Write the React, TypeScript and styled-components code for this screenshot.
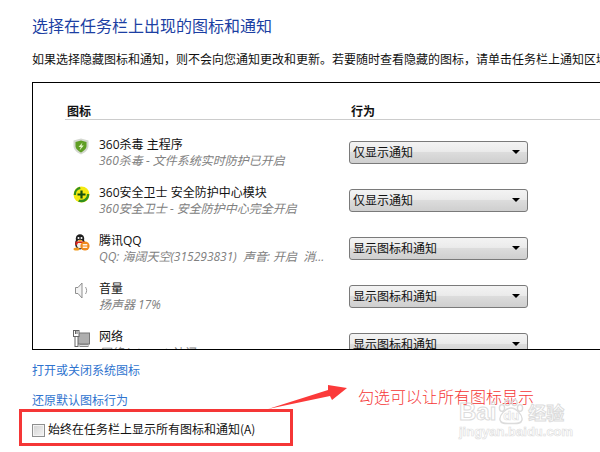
import React from "react";
import styled, { createGlobalStyle } from "styled-components";

const GlobalStyle = createGlobalStyle`
  html, body {
    margin: 0;
    padding: 0;
    background: #fff;
    overflow: hidden;
  }
`;

const FONT = `"Noto Sans CJK SC", "Liberation Sans", sans-serif`;
const LATIN = `"Open Sans", "Noto Sans CJK SC", sans-serif`;

const ShieldIcon = () => (
  <svg width="16" height="17" viewBox="0 0 16 17">
    <path d="M8 0.5 L15.5 2.5 V8 C15.5 12 11.5 15 8 16.5 C4.5 15 0.5 12 0.5 8 V2.5 Z" fill="#d4d8d0" />
    <path d="M8 2.5 L13.5 4 V8 C13.5 11 10.5 13 8 14.5 C5.5 13 2.5 11 2.5 8 V4 Z" fill="#5f9e24" />
    <path d="M9.5 4.5 L5.5 9 H7.8 L6.5 12.5 L10.8 7.5 H8.5 Z" fill="#e4f4c8" />
  </svg>
);

const GuardIcon = () => (
  <svg width="17" height="17" viewBox="0 0 17 17">
    <circle cx="8.5" cy="8.5" r="8" fill="#f5ea10" />
    <path d="M0.8 9 A7.8 7.8 0 0 1 7 0.8 L7.5 3 A5.6 5.6 0 0 0 3 9 Z" fill="#2f8f1e" />
    <path d="M16.2 8 A7.8 7.8 0 0 1 5 15.5 L6.5 13.5 A5.6 5.6 0 0 0 14 8 Z" fill="#2f8f1e" />
    <path d="M7.4 4.5 H9.6 V7.4 H12.5 V9.6 H9.6 V12.5 H7.4 V9.6 H4.5 V7.4 H7.4 Z" fill="#14500f" />
  </svg>
);

const QQIcon = () => (
  <svg width="17" height="17" viewBox="0 0 17 17">
    <ellipse cx="7" cy="9.5" rx="5" ry="6" fill="#2b2b2b" />
    <ellipse cx="7" cy="4.5" rx="4.2" ry="4.2" fill="#1e1e1e" />
    <ellipse cx="7" cy="10" rx="3.2" ry="4.2" fill="#f4f0e8" />
    <circle cx="5.5" cy="4" r="1" fill="#fff" />
    <circle cx="8.5" cy="4" r="1" fill="#fff" />
    <path d="M5 6 H9.5 L8 7.5 H6 Z" fill="#f2a81c" />
    <path d="M2.5 7.5 H11 V9 H5 L4 11 H2.5 Z" fill="#d8241c" />
    <ellipse cx="3.5" cy="15" rx="3" ry="1.6" fill="#f09a1c" />
    <circle cx="12" cy="12" r="4.6" fill="#f08a1c" />
    <path d="M9.7 10.5 H14.3 M9.7 12 H14.3 M9.7 13.5 H14.3" stroke="#fff" strokeWidth="0.9" />
  </svg>
);

const SpeakerIcon = () => (
  <svg width="16" height="17" viewBox="0 0 16 17" fill="none">
    <path d="M2.5 5.5 H5 L9 1 V16 L5 11.5 H2.5 Z" fill="#f4f4f4" stroke="#8f8f8f" />
    <path d="M12.5 5 C14 7.5 14 9.5 12.5 12" stroke="#9a9a9a" />
  </svg>
);

const NetworkIcon = () => (
  <svg width="17" height="17" viewBox="0 0 17 17">
    <rect x="4.5" y="3" width="12" height="11" fill="#aeaeae" stroke="#777" />
    <rect x="2" y="6" width="3" height="10.5" fill="#fff" stroke="#666" />
    <rect x="0.5" y="0.5" width="5.5" height="6" fill="#fff" stroke="#666" />
    <path d="M2.5 1 V4 M4 1 V4" stroke="#666" />
    <rect x="7" y="14.5" width="8" height="2" fill="#ddd" stroke="#888" />
  </svg>
);

const PawIcon = () => (
  <svg width="30" height="26" viewBox="0 0 30 26" fill="none" stroke="#dcdcdc" strokeWidth="1.4">
    <ellipse cx="6" cy="9" rx="2.6" ry="3.4" />
    <ellipse cx="11.5" cy="3.5" rx="2.6" ry="3" />
    <ellipse cx="18.5" cy="3.5" rx="2.6" ry="3" />
    <ellipse cx="24" cy="9" rx="2.6" ry="3.4" />
    <path d="M15 9 C10 9 3 16 4 21 C5 25.5 11 24.5 15 24.5 C19 24.5 25 25.5 26 21 C27 16 20 9 15 9 Z" />
  </svg>
);

const rows = [
  { icon: <ShieldIcon />, name: "360杀毒 主程序", sub: "360杀毒 - 文件系统实时防护已开启", value: "仅显示通知" },
  { icon: <GuardIcon />, name: "360安全卫士 安全防护中心模块", sub: "360安全卫士 - 安全防护中心完全开启", value: "仅显示通知" },
  { icon: <QQIcon />, name: "腾讯QQ", sub: "QQ: 海阔天空(315293831)  声音: 开启  消...", value: "显示图标和通知" },
  { icon: <SpeakerIcon />, name: "音量", sub: "扬声器 17%", value: "显示图标和通知" },
  { icon: <NetworkIcon />, name: "网络", sub: "网络 Internet 访问", value: "显示图标和通知" },
];

export default function App() {
  return (
    <Page>
      <GlobalStyle />
      <Title>选择在任务栏上出现的图标和通知</Title>
      <Description>
        如果选择隐藏图标和通知，则不会向您通知更改和更新。若要随时查看隐藏的图标，请单击任务栏上通知区域的箭头。
      </Description>
      <Panel>
        <HeaderRow>
          <HeaderCell>图标</HeaderCell>
          <HeaderCell>行为</HeaderCell>
        </HeaderRow>
        <RowList>
          {rows.map((r) => (
            <Row key={r.name}>
              <IconText>
                <IconSlot>{r.icon}</IconSlot>
                <div>
                  <Name>{r.name}</Name>
                  <Sub>{r.sub}</Sub>
                </div>
              </IconText>
              <Select>
                {r.value}
                <Caret />
              </Select>
            </Row>
          ))}
        </RowList>
      </Panel>
      <Links>
        <LinkText>打开或关闭系统图标</LinkText>
        <LinkText>还原默认图标行为</LinkText>
      </Links>
      <CheckBox>
        <Check />
        始终在任务栏上显示所有图标和通知(A)
      </CheckBox>

      <Arrow width="90" height="30" viewBox="0 0 90 30">
        <path d="M0 26 L60 7 L60 2 L79 5 L64 17 L62 13 Z" fill="#fb3a3a" />
      </Arrow>
      <Hint>勾选可以让所有图标显示</Hint>
      <Watermark>
        <Logo>
          Bai
          <DuMark>
            <PawIcon />
            <DuText>du</DuText>
          </DuMark>
          <LogoCn>经验</LogoCn>
        </Logo>
        <LogoUrl>jingyan.baidu.com</LogoUrl>
      </Watermark>
    </Page>
  );
}

const Page = styled.div`
  position: relative;
  width: 600px;
  height: 452px;
  overflow: hidden;
  padding: 16px 0 0 32px;
  box-sizing: border-box;
  font-family: ${FONT};
  font-size: 12px;
  color: #000;
  background: #fff;
`;

const Title = styled.h1`
  margin: 0;
  font-size: 16px;
  font-weight: 400;
  line-height: 18px;
  color: #1c3fa3;
  white-space: nowrap;
`;

const Description = styled.p`
  margin: 16px 0 0;
  font-size: 12px;
  line-height: 18px;
  color: #111;
  white-space: nowrap;
`;

const Panel = styled.div`
  box-sizing: border-box;
  width: 600px;
  height: 268px;
  margin-top: 14px;
  padding-left: 32px;
  border: 1px solid #000;
  overflow: hidden;
`;

const HeaderRow = styled.div`
  display: grid;
  grid-template-columns: 284px 1fr;
  height: 36px;
  align-items: end;
  border-bottom: 1px solid #ccc;
`;

const HeaderCell = styled.div`
  padding: 0 0 0 2px;
  font-size: 12px;
  font-weight: 700;
  line-height: 16px;
  color: #111;
`;

const RowList = styled.div`
  display: flex;
  flex-direction: column;
  gap: 18px;
  margin-top: 18px;
`;

const Row = styled.div`
  display: grid;
  grid-template-columns: 284px 179px;
  height: 30px;
`;

const IconText = styled.div`
  display: flex;
  gap: 9px;
  padding-left: 8px;
`;

const IconSlot = styled.div`
  width: 17px;
  height: 17px;
  flex: none;
`;

const Name = styled.div`
  margin: -1px 0 1px;
  font-family: ${LATIN};
  font-size: 12px;
  line-height: 15px;
  color: #111;
  white-space: nowrap;
`;

const Sub = styled.div`
  font-family: ${LATIN};
  font-size: 12px;
  font-style: italic;
  line-height: 15px;
  color: #808080;
  white-space: pre;
`;

const Select = styled.div`
  position: relative;
  box-sizing: border-box;
  height: 23px;
  margin-top: 3px;
  padding-left: 3px;
  border: 1px solid #7a7a7a;
  border-radius: 3px;
  background: linear-gradient(#f3f3f3 0%, #ebebeb 45%, #dcdcdc 50%, #cfcfcf 100%);
  font-size: 12px;
  line-height: 20px;
  color: #111;
`;

const Caret = styled.span`
  position: absolute;
  right: 7px;
  top: 8px;
  border-left: 4px solid transparent;
  border-right: 4px solid transparent;
  border-top: 4px solid #000;
`;

const Links = styled.div`
  display: flex;
  flex-direction: column;
  gap: 12px;
  margin-top: 11px;
`;

const LinkText = styled.div`
  font-size: 12px;
  line-height: 18px;
  color: #2f74cf;
`;

const CheckBox = styled.div`
  box-sizing: border-box;
  display: flex;
  align-items: center;
  gap: 3px;
  width: 274px;
  height: 37px;
  margin: 0 0 0 -13px;
  padding: 2px 0 0 10px;
  border: 3px solid #f53636;
  font-size: 12px;
  color: #111;
  white-space: nowrap;
`;

const Check = styled.span`
  box-sizing: border-box;
  width: 13px;
  height: 13px;
  flex: none;
  margin-top: 3px;
  border: 1px solid #8e8f8f;
  background: linear-gradient(135deg, #d2d2d2, #f4f4f4);
  box-shadow: inset 0 0 0 1px #f4f4f4;
`;

const Arrow = styled.svg`
  position: absolute;
  left: 268px;
  top: 383px;
`;

const Hint = styled.div`
  position: absolute;
  left: 358px;
  top: 385px;
  font-size: 16px;
  font-weight: 300;
  line-height: 22px;
  color: #f53636;
  white-space: nowrap;
`;

const Watermark = styled.div`
  position: absolute;
  left: 459px;
  top: 399px;
  white-space: nowrap;
`;

const Logo = styled.div`
  display: flex;
  align-items: center;
  height: 26px;
  font-family: "Liberation Sans", sans-serif;
  font-size: 24px;
  font-weight: 700;
  color: transparent;
  -webkit-text-stroke: 1px #dcdcdc;
`;

const DuMark = styled.span`
  position: relative;
  display: block;
  width: 30px;
  height: 26px;
`;

const DuText = styled.span`
  position: absolute;
  left: 7px;
  top: 9px;
  font-size: 13px;
  line-height: 15px;
  -webkit-text-stroke: 0.6px #dcdcdc;
`;

const LogoCn = styled.span`
  margin-left: 2px;
  font-family: ${FONT};
  font-size: 18px;
`;

const LogoUrl = styled.div`
  margin-top: -1px;
  font-family: "Liberation Sans", sans-serif;
  font-size: 13px;
  font-weight: 700;
  line-height: 15px;
  color: transparent;
  -webkit-text-stroke: 0.6px #dcdcdc;
`;
